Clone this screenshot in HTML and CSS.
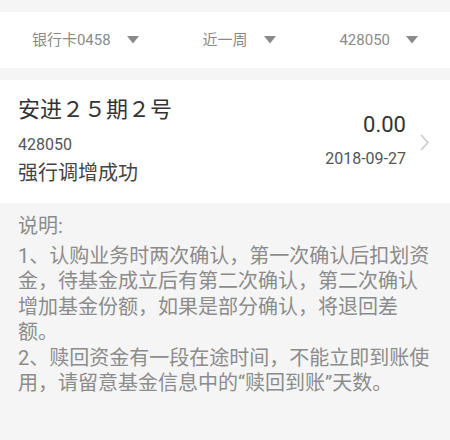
FILE: index.html
```html
<!DOCTYPE html>
<html lang="zh-CN">
<head>
<meta charset="utf-8">
<link rel="stylesheet" href="styles.css">
</head>
<body>
<div class="page">
  <div class="filters">
    <div class="filter"><span class="filter-text">银行卡0458</span><svg class="caret" width="12" height="8" viewBox="0 0 12 8"><polygon points="0,0 12,0 6,7.5" /></svg></div>
    <div class="filter"><span class="filter-text">近一周</span><svg class="caret" width="12" height="8" viewBox="0 0 12 8"><polygon points="0,0 12,0 6,7.5" /></svg></div>
    <div class="filter"><span class="filter-text">428050</span><svg class="caret" width="12" height="8" viewBox="0 0 12 8"><polygon points="0,0 12,0 6,7.5" /></svg></div>
  </div>

  <div class="card">
    <div class="card-left">
      <div class="title">安进２５期２号</div>
      <div class="code">428050</div>
      <div class="status">强行调增成功</div>
    </div>
    <div class="card-right">
      <div class="amount">0.00</div>
      <div class="date">2018-09-27</div>
    </div>
    <svg class="chevron" width="9" height="17" viewBox="0 0 9 17"><polyline points="1,1 8,8.5 1,16" /></svg>
  </div>

  <div class="notes">
    <div class="notes-head">说明:</div>
    <div class="notes-body">1、认购业务时两次确认，第一次确认后扣划资金，待基金成立后有第二次确认，第二次确认增加基金份额，如果是部分确认，将退回差额。</div>
    <div class="notes-body">2、赎回资金有一段在途时间，不能立即到账使用，请留意基金信息中的“赎回到账”天数。</div>
  </div>
</div>
</body>
</html>
```

FILE: styles.css
```css
html, body {
  margin: 0;
  padding: 0;
  background: #f5f5f5;
}

body {
  font-family: Roboto, "Noto Sans CJK SC", sans-serif;
  width: 450px;
  height: 440px;
  overflow: hidden;
}

.page {
  padding-top: 12px;
  background: #f5f5f5;
  min-height: 428px;
}

.filters {
  height: 56px;
  background: #ffffff;
  display: flex;
  justify-content: space-around;
  align-items: center;
}

.filter {
  display: flex;
  align-items: center;
  gap: 16px;
}

.filter-text {
  font-size: 15px;
  line-height: 20px;
  color: #8a8a8a;
}

.caret {
  fill: #8a8a8a;
  display: block;
}

.card {
  margin-top: 12px;
  background: #ffffff;
  display: flex;
  align-items: flex-start;
  padding: 15px 21px 16px 18px;
}

.card-left {
  flex: 1;
  display: flex;
  flex-direction: column;
}

.title {
  font-size: 22px;
  line-height: 30px;
  color: #333333;
}

.code {
  margin-top: 10px;
  font-size: 16px;
  line-height: 20px;
  color: #555555;
}

.status {
  margin-top: 4px;
  font-size: 20px;
  line-height: 28px;
  color: #444444;
}

.card-right {
  display: flex;
  flex-direction: column;
  align-items: flex-end;
  margin-top: 15px;
}

.amount {
  font-size: 22px;
  line-height: 30px;
  color: #333333;
}

.date {
  margin-top: 8px;
  font-size: 16px;
  line-height: 22px;
  color: #555555;
}

.chevron {
  display: block;
  margin-left: 14px;
  margin-top: 39px;
  fill: none;
  stroke: #c8c8c8;
  stroke-width: 1.5;
}

.notes {
  padding: 11px 18px 0 18px;
  color: #8c8c8c;
  font-size: 20px;
  line-height: 25.5px;
}

.notes-head {
  margin-bottom: 4px;
}

.notes-body {
  line-break: strict;
}
```
